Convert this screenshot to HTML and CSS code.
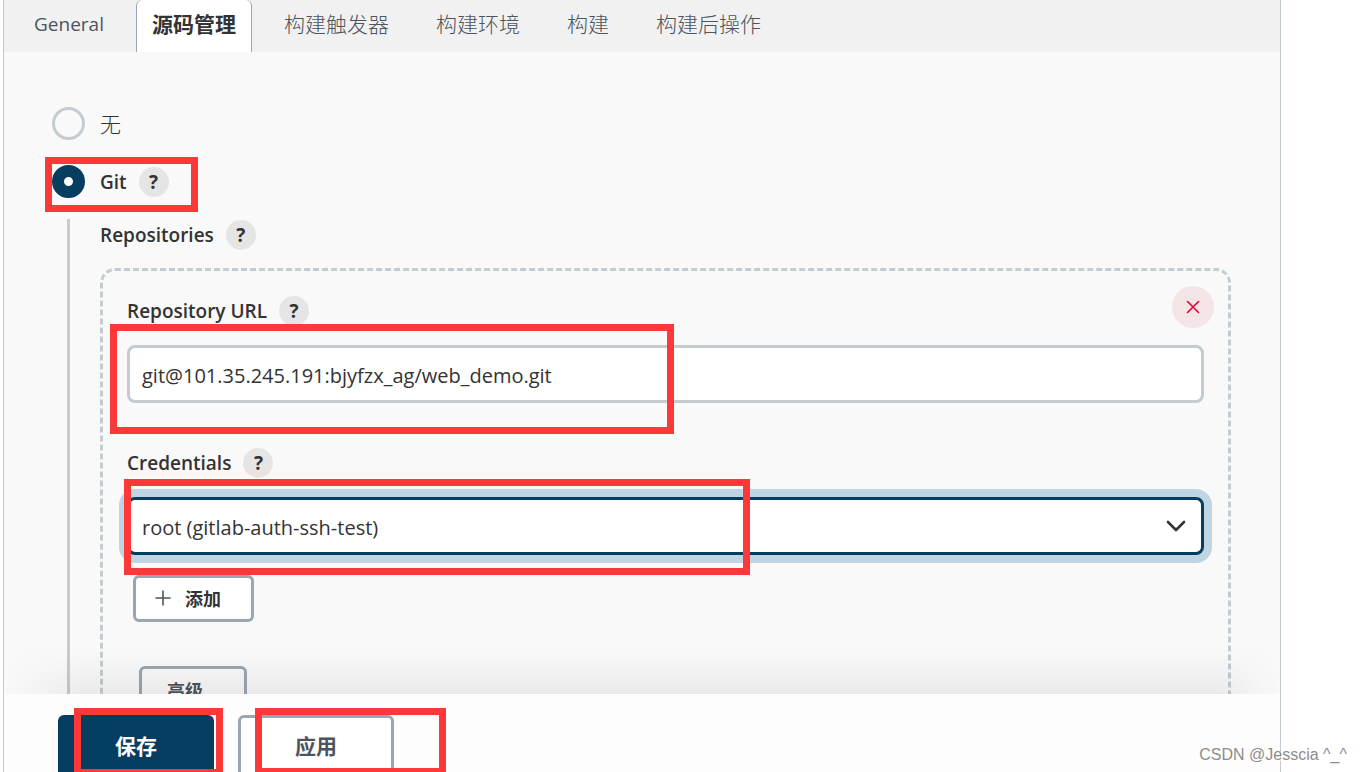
FILE: index.html
```html
<!DOCTYPE html>
<html lang="zh-CN">
<head>
    <meta charset="UTF-8">
    <meta name="viewport" content="width=device-width, initial-scale=1.0">
    <title>源码管理</title>
    <link rel="stylesheet" href="styles.css">
</head>
<body>
    <form class="panel">
        <nav class="tabs">
            <a class="tab latin" href="#general">General</a>
            <a class="tab active" href="#scm">源码管理</a>
            <a class="tab" href="#triggers">构建触发器</a>
            <a class="tab" href="#env">构建环境</a>
            <a class="tab" href="#build">构建</a>
            <a class="tab" href="#post">构建后操作</a>
        </nav>

        <main class="content" id="scm">
            <div class="radio-row">
                <input type="radio" class="radio" id="scm-none" name="scm">
                <label for="scm-none">无</label>
            </div>
            <div class="radio-row">
                <input type="radio" class="radio" id="scm-git" name="scm" checked>
                <label class="label" for="scm-git">Git</label>
                <button type="button" class="help">?</button>
            </div>

            <section class="nested">
                <div class="label-row">
                    <span class="label">Repositories</span>
                    <button type="button" class="help">?</button>
                </div>

                <div class="repo">
                    <button type="button" class="delete" aria-label="删除">
                        <svg width="14" height="14" viewBox="0 0 14 14"><path d="M1.5 1.5l11 11M12.5 1.5l-11 11" fill="none" stroke="#e6002f" stroke-width="1.6" stroke-linecap="round"/></svg>
                    </button>

                    <div class="label-row">
                        <label class="label" for="repo-url">Repository URL</label>
                        <button type="button" class="help">?</button>
                    </div>
                    <input type="text" class="field" id="repo-url" value="git@101.35.245.191:bjyfzx_ag/web_demo.git">

                    <div class="label-row credentials">
                        <label class="label" for="credentials">Credentials</label>
                        <button type="button" class="help">?</button>
                    </div>
                    <div class="select-wrap">
                        <select class="field focused" id="credentials">
                            <option>root (gitlab-auth-ssh-test)</option>
                        </select>
                        <svg class="chevron" width="20" height="12" viewBox="0 0 20 12"><path d="M2 2l8 8 8-8" fill="none" stroke="#333" stroke-width="2.6" stroke-linecap="round" stroke-linejoin="round"/></svg>
                    </div>

                    <button type="button" class="small-button add">
                        <svg width="16" height="16" viewBox="0 0 16 16"><path d="M8 1v14M1 8h14" fill="none" stroke="#4d545d" stroke-width="1.6" stroke-linecap="round"/></svg>
                        添加
                    </button>
                    <button type="button" class="small-button advanced">高级</button>
                </div>
            </section>
        </main>

        <footer class="bottom-bar">
            <button type="submit" class="big-button primary">保存</button>
            <button type="button" class="big-button">应用</button>
        </footer>
    </form>

    <!-- highlight marks -->
    <div class="mark mark-git"></div>
    <div class="mark mark-url"></div>
    <div class="mark mark-credentials"></div>
    <div class="mark mark-save"></div>
    <div class="mark mark-apply"></div>

    <div class="watermark">CSDN @Jesscia ^_^</div>
</body>
</html>
```
FILE: styles.css
```css
* {
    box-sizing: border-box;
}
body {
    position: relative;
    height: 100vh;
    margin: 0;
    overflow: hidden;
    background-color: #fff;
    color: #333;
    font-family: "Open Sans", "Noto Sans CJK SC", sans-serif;
    font-size: 20px;
    line-height: 32px;
}
button, input, select {
    margin: 0;
    font-family: inherit;
    color: inherit;
}
.panel {
    display: flex;
    flex-direction: column;
    height: 100%;
    margin: 0 81px 0 3px;
    border: 1px solid #c3ccd1;
    border-width: 0 1px;
    background-color: #f9f9f9;
}

/* tabs */
.tabs {
    display: flex;
    flex: none;
    gap: 17px;
    height: 52px;
    padding: 0 15px;
    background-color: #f1f1f1;
}
.tab {
    padding: 8px 15px;
    color: #4d545d;
    font-size: 21px;
    font-weight: 300;
    text-decoration: none;
}
.tab.latin {
    font-size: 19px;
    font-weight: 400;
}
.tab.active {
    border: 1px solid #9ba6af;
    border-width: 0 1px;
    border-radius: 6px 6px 0 0;
    background-color: #fff;
    color: #333;
    font-weight: 700;
}

/* form */
.content {
    flex: 1;
    min-height: 0;
    padding: 55px 49px 0 48px;
    overflow: hidden;
}
.radio-row, .label-row {
    display: flex;
    align-items: center;
}
.radio-row {
    height: 33px;
    margin-bottom: 25px;
    font-size: 21px;
    font-weight: 300;
}
.radio {
    width: 33px;
    height: 33px;
    margin-right: 15px;
    border: 3px solid #c3ccd1;
    border-radius: 50%;
    appearance: none;
}
.radio:checked {
    border: 12px solid #063e61;
    background-color: #fff;
}
.label {
    font-size: 19px;
    font-weight: 600;
}
.help {
    width: 30px;
    height: 30px;
    margin-left: 12px;
    padding: 0;
    border: none;
    border-radius: 50%;
    background-color: #e5e5e5;
    font-size: 19px;
    font-weight: 700;
    line-height: 30px;
}
.nested {
    margin: -4px 0 0 15px;
    padding-left: 30px;
    border-left: 3px solid #c3ccd1;
}
.label-row {
    height: 32px;
}
.repo {
    position: relative;
    height: 560px;
    margin-top: 17px;
    padding: 24px;
    border: 3px dashed #c3ccd1;
    border-radius: 15px;
}
.delete {
    display: flex;
    position: absolute;
    top: 15px;
    right: 14px;
    align-items: center;
    justify-content: center;
    width: 42px;
    height: 42px;
    border: none;
    border-radius: 50%;
    background-color: #f6e5e7;
}
.field {
    display: block;
    width: 100%;
    height: 58px;
    margin-top: 18px;
    padding: 2px 12px 0;
    border: 3px solid #c3ccd1;
    border-radius: 8px;
    outline: none;
    background-color: #fff;
    font-size: 20px;
    appearance: none;
}
.field.focused {
    border-color: #063e61;
    box-shadow: 0 0 0 8px #bfd5e3;
}
.credentials {
    margin-top: 44px;
}
.select-wrap {
    position: relative;
}
.chevron {
    position: absolute;
    top: 23px;
    right: 18px;
    pointer-events: none;
}
.small-button {
    display: flex;
    align-items: center;
    justify-content: center;
    height: 47px;
    border: 3px solid #9ba6af;
    border-radius: 6px;
    background-color: #fff;
    font-size: 18px;
    font-weight: 700;
}
.add {
    gap: 14px;
    margin: 20px 0 0 6px;
    padding: 0 30px 2px 19px;
}
.advanced {
    margin: 44px 0 0 12px;
    padding: 0 41px 0 25px;
    background-color: #f9f9f9;
    color: #4d545d;
}

/* save / apply */
.bottom-bar {
    display: flex;
    position: relative;
    flex: none;
    gap: 24px;
    height: 78px;
    padding: 21px 54px 0;
    background-color: #fdfdfd;
}
.bottom-bar::before {
    content: "";
    position: absolute;
    right: 0;
    bottom: 100%;
    left: 0;
    height: 48px;
    background: linear-gradient(to top, rgba(0, 0, 0, 0.06), rgba(0, 0, 0, 0.02) 60%, transparent);
    mask-image: linear-gradient(to right, transparent, #000 80px, #000 calc(100% - 60px), transparent);
}
.big-button {
    width: 156px;
    height: 64px;
    padding: 0 0 4px;
    border: 3px solid #9ba6af;
    border-radius: 6px;
    background-color: #fff;
    color: #4d545d;
    font-size: 21px;
    font-weight: 700;
}
.big-button.primary {
    border-color: #063e61;
    background-color: #063e61;
    color: #fff;
}

/* highlight marks */
.mark {
    position: absolute;
    border: 7px solid #fc3838;
    pointer-events: none;
}
.mark-git {
    top: 157px;
    left: 45px;
    width: 153px;
    height: 55px;
}
.mark-url {
    top: 324px;
    left: 110px;
    width: 564px;
    height: 110px;
}
.mark-credentials {
    top: 479px;
    left: 124px;
    width: 626px;
    height: 96px;
}
.mark-save {
    top: 708px;
    left: 74px;
    width: 149px;
    height: 68px;
}
.mark-apply {
    top: 708px;
    left: 255px;
    width: 191px;
    height: 67px;
}
.watermark {
    position: absolute;
    right: 15px;
    bottom: 5px;
    color: #8c8c8c;
    font-family: "Liberation Sans", sans-serif;
    font-size: 16px;
    line-height: 24px;
    text-shadow: 1px 1px 0 #fff;
}
```
